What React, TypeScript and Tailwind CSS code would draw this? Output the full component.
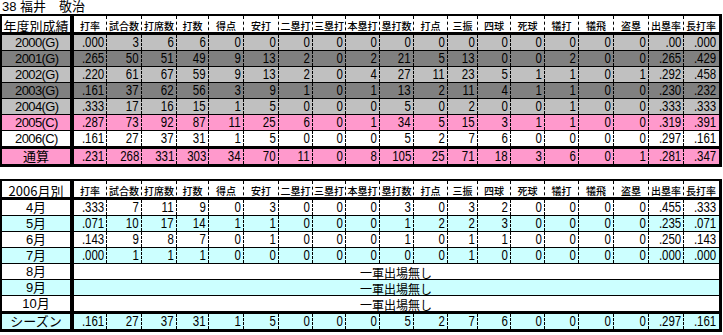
const COLS =
  "grid grid-cols-[72px_33px_35px_35px_32px_35px_35px_34px_33px_34px_34px_34px_30px_33px_34px_34px_35px_35px_35px_34px]";

const FONT = "font-['Liberation_Sans','Noto_Sans_CJK_JP',sans-serif]";
const CJK = "font-['Noto_Sans_CJK_JP',sans-serif]";

const heads = [
  "打率", "試合数", "打席数", "打数", "得点", "安打", "二塁打", "三塁打", "本塁打", "塁打数",
  "打点", "三振", "四球", "死球", "犠打", "犠飛", "盗塁", "出塁率", "長打率",
];

type Row = { label: string; bg: string; vals?: string[]; kana?: boolean };

const yearly: Row[] = [
  { label: "2000(G)", bg: "bg-[#c0c0c0]", vals: ".000 3 6 6 0 0 0 0 0 0 0 0 0 0 0 0 0 .00 .000".split(" ") },
  { label: "2001(G)", bg: "bg-[#808080]", vals: ".265 50 51 49 9 13 2 0 2 21 5 13 0 0 2 0 0 .265 .429".split(" ") },
  { label: "2002(G)", bg: "bg-[#c0c0c0]", vals: ".220 61 67 59 9 13 2 0 4 27 11 23 5 1 1 0 1 .292 .458".split(" ") },
  { label: "2003(G)", bg: "bg-[#808080]", vals: ".161 37 62 56 3 9 1 0 1 13 2 11 4 1 1 0 0 .230 .232".split(" ") },
  { label: "2004(G)", bg: "bg-[#c0c0c0]", vals: ".333 17 16 15 1 5 0 0 0 5 0 2 0 0 1 0 0 .333 .333".split(" ") },
  { label: "2005(C)", bg: "bg-[#ff99cc]", vals: ".287 73 92 87 11 25 6 0 1 34 5 15 3 1 1 0 0 .319 .391".split(" ") },
  { label: "2006(C)", bg: "bg-white", vals: ".161 27 37 31 1 5 0 0 0 5 2 7 6 0 0 0 0 .297 .161".split(" ") },
];
const yearTotal: Row = {
  label: "通算", kana: true, bg: "bg-[#ff99cc]",
  vals: ".231 268 331 303 34 70 11 0 8 105 25 71 18 3 6 0 1 .281 .347".split(" "),
};

const monthly: Row[] = [
  { label: "4月", kana: true, bg: "bg-white", vals: ".333 7 11 9 0 3 0 0 0 3 0 3 2 0 0 0 0 .455 .333".split(" ") },
  { label: "5月", kana: true, bg: "bg-[#ccffff]", vals: ".071 10 17 14 1 1 0 0 0 1 2 2 3 0 0 0 0 .235 .071".split(" ") },
  { label: "6月", kana: true, bg: "bg-white", vals: ".143 9 8 7 0 1 0 0 0 1 0 1 1 0 0 0 0 .250 .143".split(" ") },
  { label: "7月", kana: true, bg: "bg-[#ccffff]", vals: ".000 1 1 1 0 0 0 0 0 0 0 1 0 0 0 0 0 .000 .000".split(" ") },
  { label: "8月", kana: true, bg: "bg-white" },
  { label: "9月", kana: true, bg: "bg-[#ccffff]" },
  { label: "10月", kana: true, bg: "bg-white" },
];
const monthTotal: Row = {
  label: "シーズン", kana: true, bg: "bg-[#ccffff]",
  vals: ".161 27 37 31 1 5 0 0 0 5 2 7 6 0 0 0 0 .297 .161".split(" "),
};

function HeadRow({ title }: { title: string }) {
  return (
    <div className={COLS + " h-[19px] border-b-[3px] border-black bg-white"}>
      <div className={"flex items-center justify-center border-r-[4px] border-black text-[13px] whitespace-nowrap " + CJK}>
        {title}
      </div>
      {heads.map((h, i) => (
        <div
          key={h}
          className={
            "flex items-center justify-center text-[10px] font-medium whitespace-nowrap " + CJK + " " +
            (i < heads.length - 1 ? "border-r border-dashed border-black" : "")
          }
        >
          {h}
        </div>
      ))}
    </div>
  );
}

function DataRow({ row, bottom }: { row: Row; bottom: string }) {
  return (
    <div className={COLS + " " + row.bg + " " + bottom + " border-black"}>
      {row.kana ? (
        <div className="border-r-[4px] border-black text-center text-[13px] leading-[15px] whitespace-nowrap">
          {row.label}
        </div>
      ) : (
        <div className="border-r-[4px] border-black pl-[13px] text-left text-[13px] leading-[15px] tracking-[-0.6px] whitespace-nowrap">
          {row.label}
        </div>
      )}
      {row.vals ? (
        row.vals.map((v, i) => (
          <div
            key={i}
            className={
              "flex items-center justify-end pr-[2px] " +
              (i < row.vals!.length - 1 ? "border-r border-dashed border-black" : "")
            }
          >
            <span className="inline-block origin-right scale-x-[0.82] text-[14px] leading-[15px]">{v}</span>
          </div>
        ))
      ) : (
        <div className={"col-span-19 flex items-center justify-center text-[12px] " + CJK}>一軍出場無し</div>
      )}
    </div>
  );
}

function Table({ title, rows, total }: { title: string; rows: Row[]; total: Row }) {
  return (
    <div className="w-[722px] border-2 border-r-[3px] border-b-[3px] border-black">
      <HeadRow title={title} />
      {rows.map((r, i) => (
        <DataRow
          key={r.label}
          row={r}
          bottom={i < rows.length - 1 ? "h-[16px] border-b" : "h-[18px] border-b-[3px]"}
        />
      ))}
      <DataRow row={total} bottom="h-[15px]" />
    </div>
  );
}

export default function App() {
  return (
    <div className={"w-[723px] h-[335px] overflow-hidden bg-white text-black " + FONT}>
      <div className="flex h-[14px] items-center pl-[2px] text-[13px] whitespace-pre">38 福井　敬治</div>
      <Table title="年度別成績" rows={yearly} total={yearTotal} />
      <div className="h-[12px]" />
      <Table title="2006月別" rows={monthly} total={monthTotal} />
    </div>
  );
}
